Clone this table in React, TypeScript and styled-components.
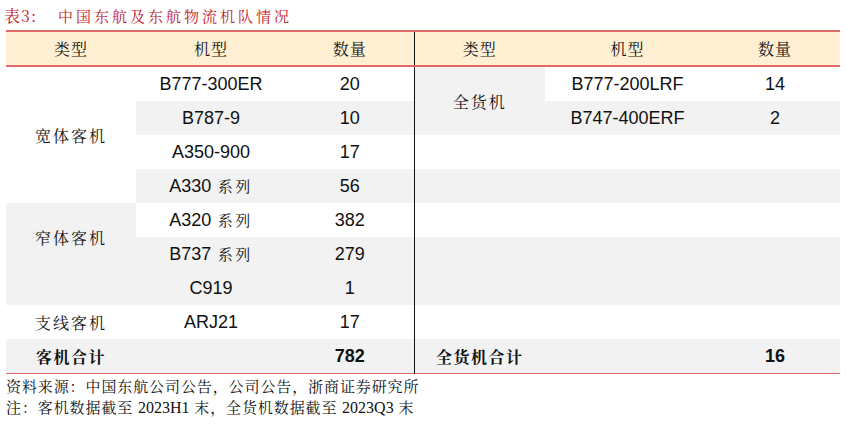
import React from "react";
import { styled, createGlobalStyle } from "styled-components";

const GlobalStyle = createGlobalStyle`
  html, body {
    margin: 0;
    padding: 0;
    background: #ffffff;
  }
  body {
    font-family: "Liberation Sans", "Noto Sans CJK SC", sans-serif;
    color: #111111;
  }
`;

const CJK_SERIF = `"Noto Serif CJK SC", "Noto Sans CJK SC", serif`;
const LATIN = `"Liberation Sans", "Noto Sans CJK SC", sans-serif`;

const RED_LINE = "#e06a6a";
const HEAD_BG = "#fff0d4";
const STRIPE = "#f2f2f2";

type Cell = { text?: string; span?: number; gray?: boolean };
type Row = {
  left: Cell | null;
  model: string;
  count: string;
  right: Cell | null;
  rModel: string;
  rCount: string;
  gray: boolean;
};

const rows: Row[] = [
  { left: { text: "宽体客机", span: 4 }, model: "B777-300ER", count: "20", right: { text: "全货机", span: 2, gray: true }, rModel: "B777-200LRF", rCount: "14", gray: false },
  { left: null, model: "B787-9", count: "10", right: null, rModel: "B747-400ERF", rCount: "2", gray: true },
  { left: null, model: "A350-900", count: "17", right: {}, rModel: "", rCount: "", gray: false },
  { left: null, model: "A330 系列", count: "56", right: { gray: true }, rModel: "", rCount: "", gray: true },
  { left: { text: "窄体客机", span: 2, gray: true }, model: "A320 系列", count: "382", right: {}, rModel: "", rCount: "", gray: false },
  { left: null, model: "B737 系列", count: "279", right: { gray: true }, rModel: "", rCount: "", gray: true },
  { left: { gray: true }, model: "C919", count: "1", right: { gray: true }, rModel: "", rCount: "", gray: true },
  { left: { text: "支线客机" }, model: "ARJ21", count: "17", right: {}, rModel: "", rCount: "", gray: false },
];

// "A330 系列" -> latin model + CJK series suffix
const splitModel = (s: string) => {
  const i = s.indexOf(" ");
  if (i < 0) return <>{s}</>;
  return (
    <>
      {s.slice(0, i)}
      <Kai>{s.slice(i)}</Kai>
    </>
  );
};

export default function App() {
  return (
    <Page>
      <GlobalStyle />
      <Title>
        <TitleTag>表3:</TitleTag>
        <TitleText>中国东航及东航物流机队情况</TitleText>
      </Title>
      <Table>
        <colgroup>
          <col style={{ width: 130 }} />
          <col style={{ width: 150 }} />
          <col style={{ width: 128 }} />
          <col style={{ width: 131 }} />
          <col style={{ width: 165 }} />
          <col style={{ width: 130 }} />
        </colgroup>
        <thead>
          <tr>
            <Head>类型</Head>
            <Head>机型</Head>
            <Head>数量</Head>
            <Head $divider>类型</Head>
            <Head>机型</Head>
            <Head>数量</Head>
          </tr>
        </thead>
        <tbody>
          {rows.map((r, i) => (
            <tr key={i}>
              {r.left && (
                <TypeCell rowSpan={r.left.span ?? 1} $gray={!!r.left.gray}>
                  {r.left.text}
                </TypeCell>
              )}
              <ValueCell $gray={r.gray}>{splitModel(r.model)}</ValueCell>
              <ValueCell $gray={r.gray}>{r.count}</ValueCell>
              {r.right && (
                <TypeCell rowSpan={r.right.span ?? 1} $gray={!!r.right.gray} $divider>
                  {r.right.text}
                </TypeCell>
              )}
              <ValueCell $gray={r.gray}>{r.rModel}</ValueCell>
              <ValueCell $gray={r.gray}>{r.rCount}</ValueCell>
            </tr>
          ))}
          <TotalRow>
            <TotalLabel>客机合计</TotalLabel>
            <TotalValue />
            <TotalValue>782</TotalValue>
            <TotalLabel $divider>全货机合计</TotalLabel>
            <TotalValue />
            <TotalValue>16</TotalValue>
          </TotalRow>
        </tbody>
      </Table>
      <Notes>
        <NoteLine>资料来源：中国东航公司公告，公司公告，浙商证券研究所</NoteLine>
        <NoteLine>
          注：客机数据截至 <Num>2023H1</Num> 末，全货机数据截至 <Num>2023Q3</Num> 末
        </NoteLine>
      </Notes>
    </Page>
  );
}

const Page = styled.div`
  width: 846px;
  height: 430px;
  overflow: hidden;
  box-sizing: border-box;
  padding: 0 0 0 6px;
`;

const Title = styled.div`
  height: 30px;
  display: flex;
  align-items: center;
  margin-left: -2px;
  color: #c4232b;
  font-family: ${CJK_SERIF};
  font-size: 15px;
`;

const TitleTag = styled.span`
  width: 54px;
  font-size: 16px;
  letter-spacing: 1px;
`;

const TitleText = styled.span`
  letter-spacing: 3px;
`;

const Table = styled.table`
  width: 834px;
  table-layout: fixed;
  border-collapse: collapse;
  border-top: 2px solid ${RED_LINE};
  border-bottom: 1.5px solid ${RED_LINE};
`;

const Head = styled.th<{ $divider?: boolean }>`
  height: 33px;
  padding: 0;
  background: ${HEAD_BG};
  border-bottom: 2px solid ${RED_LINE};
  border-left: ${(p) => (p.$divider ? "1.5px solid #111" : "none")};
  font-family: ${CJK_SERIF};
  font-weight: 400;
  font-size: 16px;
  letter-spacing: 1px;
  text-align: center;
  vertical-align: middle;
`;

const TypeCell = styled.td<{ $gray: boolean; $divider?: boolean }>`
  padding: 0;
  background: ${(p) => (p.$gray ? STRIPE : "#ffffff")};
  border-left: ${(p) => (p.$divider ? "1.5px solid #111" : "none")};
  font-family: ${CJK_SERIF};
  font-size: 16px;
  letter-spacing: 2px;
  text-align: center;
  vertical-align: middle;
`;

const ValueCell = styled.td<{ $gray: boolean }>`
  height: 34px;
  padding: 0;
  background: ${(p) => (p.$gray ? STRIPE : "#ffffff")};
  font-family: ${LATIN};
  font-size: 18px;
  text-align: center;
  vertical-align: middle;
  white-space: nowrap;
`;

const Kai = styled.span`
  font-family: ${CJK_SERIF};
  font-size: 15px;
  letter-spacing: 2.5px;
`;

const TotalRow = styled.tr`
  background: ${STRIPE};
`;

const TotalLabel = styled.td<{ $divider?: boolean }>`
  height: 34px;
  padding: 0;
  border-left: ${(p) => (p.$divider ? "1.5px solid #111" : "none")};
  font-family: ${CJK_SERIF};
  font-weight: 700;
  font-size: 16px;
  letter-spacing: 1.5px;
  text-align: center;
  vertical-align: middle;
`;

const TotalValue = styled.td`
  padding: 0;
  font-family: ${LATIN};
  font-weight: 700;
  font-size: 18px;
  text-align: center;
  vertical-align: middle;
`;

const Notes = styled.div`
  padding-top: 1px;
  font-family: ${CJK_SERIF};
  font-size: 15px;
  color: #111;
`;

const NoteLine = styled.div`
  height: 21px;
  line-height: 22px;
  letter-spacing: 0.9px;
  white-space: nowrap;
`;

const Num = styled.span`
  font-family: "Liberation Serif", serif;
  font-size: 16px;
  letter-spacing: 0;
`;
